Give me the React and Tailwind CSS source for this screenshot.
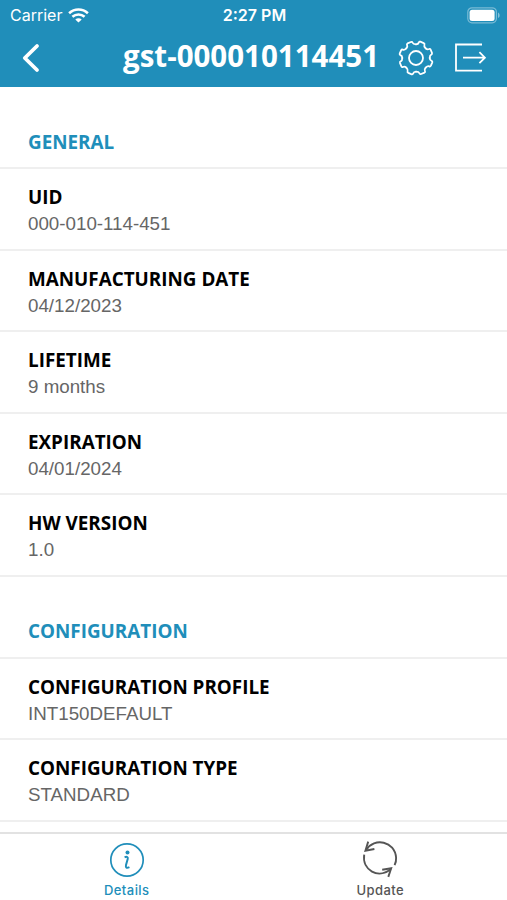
const sections = [
  {
    title: 'GENERAL',
    rows: [
      { label: 'UID', value: '000-010-114-451' },
      { label: 'MANUFACTURING DATE', value: '04/12/2023' },
      { label: 'LIFETIME', value: '9 months' },
      { label: 'EXPIRATION', value: '04/01/2024' },
      { label: 'HW VERSION', value: '1.0' },
    ],
  },
  {
    title: 'CONFIGURATION',
    rows: [
      { label: 'CONFIGURATION PROFILE', value: 'INT150DEFAULT' },
      { label: 'CONFIGURATION TYPE', value: 'STANDARD' },
    ],
  },
]

// one eighth of the gear outline, repeated every 45 degrees
const gearTooth = 'M0 -13.7 C1.9 -13.7 2.5 -14.4 2.9 -15.6 Q3.2 -16.6 4.3 -16.3 L7.7 -14.9 Q8.9 -14.3 8.4 -13.2 C7.8 -11.9 8.3 -11.1 9.69 -9.69'
const gearAngles = [0, 45, 90, 135, 180, 225, 270, 315]

function GearIcon() {
  return (
    <svg width="36" height="36" viewBox="-18 -18 36 36" fill="none" stroke="currentColor" strokeWidth="1.8" strokeLinecap="round" strokeLinejoin="round">
      {gearAngles.map(a => <path key={a} d={gearTooth} transform={`rotate(${a})`} />)}
      <circle r="7" />
    </svg>
  )
}

function ExitIcon() {
  return (
    <svg width="34" height="30" viewBox="0 0 34 30" fill="none" stroke="currentColor" strokeWidth="1.8">
      <path d="M28 1.5H2V27.7H28" />
      <path d="M9 14.7H30.5M25.4 9.2L30.9 14.7L25.4 20.2" strokeWidth="1.8" />
    </svg>
  )
}

function WifiIcon() {
  return (
    <svg width="21" height="15" viewBox="0 0 21 15" fill="none" stroke="currentColor" strokeWidth="2.6">
      <path d="M1.1 5.2C6.5 .3 14.5 .3 19.9 5.2" />
      <path d="M4.4 8.8C7.9 5.7 13.1 5.7 16.6 8.8" />
      <path d="M10.5 14.6L7.3 11.4C9.1 9.9 11.9 9.9 13.7 11.4Z" fill="currentColor" stroke="none" />
    </svg>
  )
}

function BatteryIcon() {
  return (
    <svg width="34" height="17" viewBox="0 0 34 17">
      <rect x=".8" y=".8" width="28.6" height="15" rx="4.2" fill="none" stroke="white" strokeOpacity=".4" strokeWidth="1.2" />
      <rect x="2.6" y="2.7" width="25" height="11.2" rx="2.5" fill="white" />
      <path d="M31 5.5C33.2 6.6 33.2 10 31 11.1Z" fill="white" fillOpacity=".45" />
    </svg>
  )
}

function InfoIcon() {
  return (
    <svg width="36" height="36" viewBox="0 0 36 36" fill="none" stroke="currentColor" strokeWidth="1.7">
      <circle cx="18" cy="18" r="16.2" />
      <circle cx="18.5" cy="10.4" r="2" fill="currentColor" stroke="none" />
      <path d="M15.6 15.2C18 14.4 19.3 15 18.7 17.1L17 23.1C16.4 25.6 17.6 26.5 20.4 25.2" strokeWidth="2" />
    </svg>
  )
}

function UpdateIcon() {
  return (
    <svg width="36" height="38" viewBox="0 0 36 38" fill="none" stroke="currentColor" strokeWidth="1.9">
      <path d="M4 10.2C12.2 -3.2 33 1.1 34.1 17.8C34.3 20.5 33.7 22.9 32.6 25.2" />
      <path d="M2.2 14.7C-.2 30.2 16.5 39.5 28.8 29" />
      <path d="M6.2 1.6L3.4 10.7L12.4 9" />
      <path d="M20.2 29.8L29.2 28.2L26.3 36.9" />
    </svg>
  )
}

function Row({ label, value }) {
  return (
    <div className="h-[81.6px] shrink-0 border-b-2 border-[#efefef] pl-7 pt-[15px]">
      <div className="text-[18.85px] leading-[27px] font-bold text-black">{label}</div>
      <div className="font-['Liberation_Sans',sans-serif] text-[18.75px] leading-[25px] text-[#666]">{value}</div>
    </div>
  )
}

export default function App() {
  return (
    <div className="flex h-[900px] w-[507px] flex-col overflow-hidden bg-white font-['Open_Sans',sans-serif]">
      <header className="h-[87.4px] shrink-0 bg-[#208eba] text-white">
        <div className="grid h-[30px] grid-cols-3 items-center pl-[10px] pr-[6px] font-[Inter,sans-serif] text-[16px]">
          <div className="flex items-center gap-[6px]">
            <span className="text-[16px]">Carrier</span>
            <WifiIcon />
          </div>
          <span className="pr-[2px] text-center font-semibold">2:27 PM</span>
          <div className="flex justify-end"><BatteryIcon /></div>
        </div>
        <div className="flex h-[56px] items-center pl-[21px]">
          <svg width="20" height="30" viewBox="0 0 20 30" fill="none" stroke="currentColor" strokeWidth="3.8" strokeLinecap="round" strokeLinejoin="round">
            <path d="M16 3L3.8 15L16 27" />
          </svg>
          <h1 className="ml-[82px] w-[257px] whitespace-nowrap pb-[5px] text-[29.5px] leading-10 font-bold">gst-000010114451</h1>
          <div className="ml-[18.4px] flex items-center gap-[19.4px]">
            <GearIcon />
            <ExitIcon />
          </div>
        </div>
      </header>

      <main className="flex min-h-0 flex-1 flex-col overflow-hidden">
        {sections.map(section => (
          <section key={section.title} className="shrink-0">
            <h2 className="h-[81.6px] border-b-2 border-[#efefef] pl-7 pt-[41.4px] text-[18.85px] leading-[27px] font-bold text-[#208eba]">{section.title}</h2>
            {section.rows.map(row => <Row key={row.label} {...row} />)}
          </section>
        ))}
      </main>

      <nav className="grid h-[68px] shrink-0 grid-cols-2 border-t-2 border-[#e2e2e2] font-[Inter,sans-serif] text-[13px] leading-4 font-medium tracking-[0.45px]">
        <div className="flex flex-col items-center pt-[8px] text-[#208eba]">
          <InfoIcon />
          <span className="mt-[4px]">Details</span>
        </div>
        <div className="flex flex-col items-center pt-[6px] text-[#555]">
          <UpdateIcon />
          <span className="mt-[4px]">Update</span>
        </div>
      </nav>
    </div>
  )
}
